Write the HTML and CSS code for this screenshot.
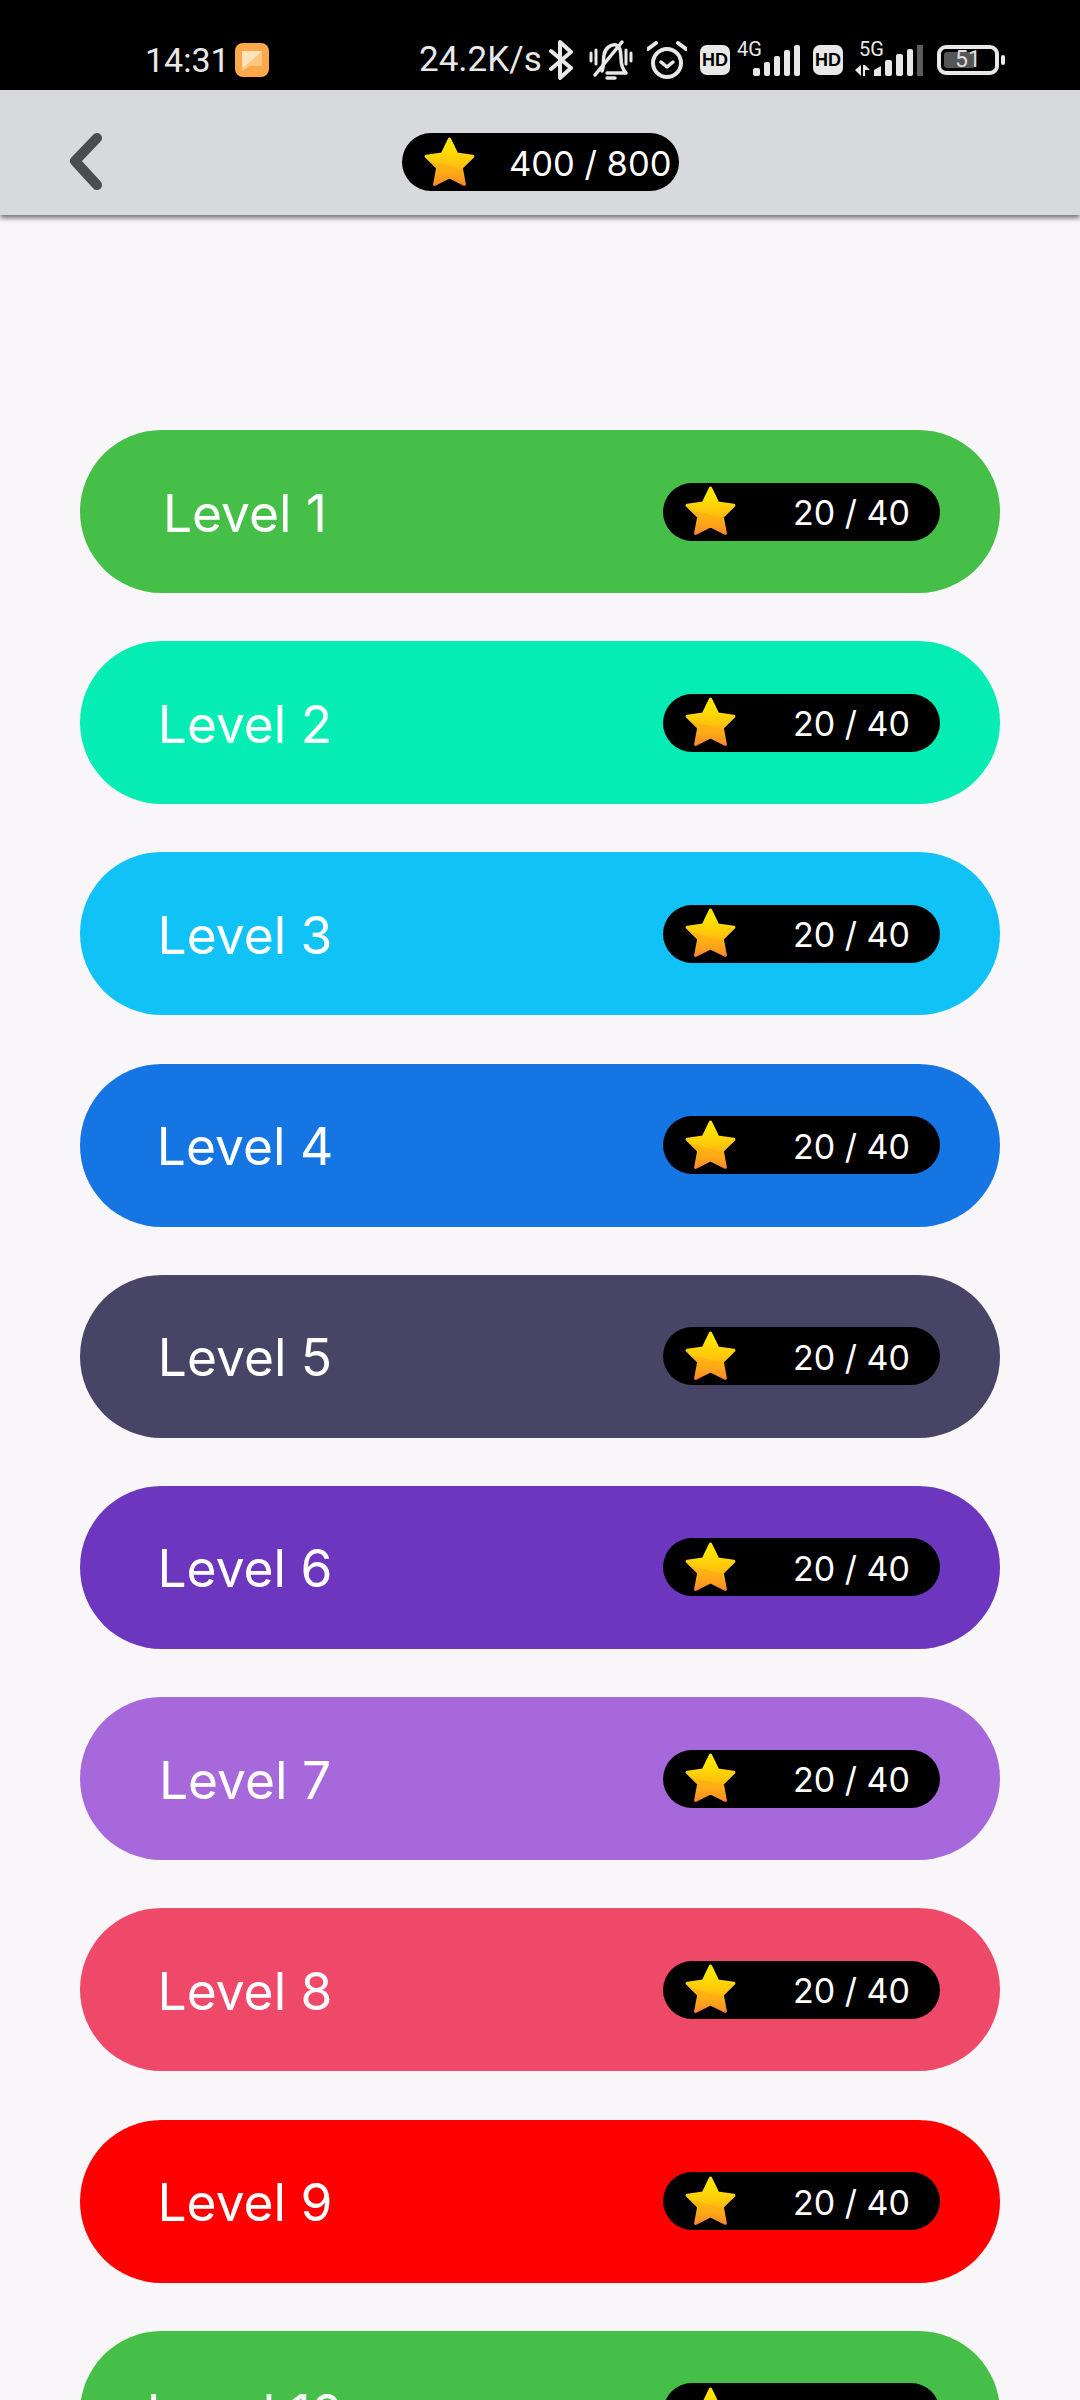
FILE: index.html
```html
<!DOCTYPE html>
<html lang="en">
<head>
    <meta charset="UTF-8">
    <meta name="viewport" content="width=device-width, initial-scale=1.0">
    <title>Levels</title>
    <link rel="stylesheet" href="styles.css">
</head>
<body>
    <!-- Shared star icon -->
    <svg class="defs" width="0" height="0" aria-hidden="true">
        <defs>
            <linearGradient id="starFill" gradientUnits="userSpaceOnUse" x1="50" y1="4" x2="50" y2="96">
                <stop offset="0.15" stop-color="#ffe600"/>
                <stop offset="0.7" stop-color="#ffb413"/>
                <stop offset="1" stop-color="#f47a3a"/>
            </linearGradient>
            <symbol id="star" viewBox="0 0 100 100">
                <path d="M50 6 L63.500 34 L94 38.500 L72 60 L78 91 L50 77 L22 91 L28 60 L6 38.500 L36.500 34 Z" fill="url(#starFill)" stroke="url(#starFill)" stroke-width="6" stroke-linejoin="round"/>
                <path d="M12 47 L74 62 L79 92 L50 78 L21 92 L26 61 Z" fill="#ff9a1a" opacity="0.35"/>
            </symbol>
        </defs>
    </svg>

    <!-- Status bar -->
    <div class="status-bar">
        <span class="clock">14:31</span>
        <svg class="notif" width="34" height="34" viewBox="0 0 34 34">
            <rect width="34" height="34" rx="8" fill="#fba94a"/>
            <path d="M7 8 H27 V23 H14 L7 28 Z" fill="#ffe3bd"/>
            <path d="M7 26 L27 8 V23 H14 L7 28 Z" fill="#ffc67f"/>
        </svg>
        <span class="speed">24.2K/s</span>
        <svg class="ic-bt" width="24" height="40" viewBox="0 0 24 40" fill="none" stroke="#e8e8e8" stroke-width="4" stroke-linecap="round" stroke-linejoin="round">
            <path d="M2 11 L22 28 L11 38 V2 L22 12 L2 29"/>
        </svg>
        <svg class="ic-bell" width="44" height="40" viewBox="0 0 44 40" fill="none" stroke="#e8e8e8" stroke-width="3.500" stroke-linecap="round" stroke-linejoin="round">
            <path d="M2 13 V21 M7 10 V24 M37 10 V24 M42 13 V21" stroke-width="3"/>
            <path d="M13 31 C15 27 14 20 15 15 C16 8 22 4 27 5 C31 6 32 12 32 18 C32 24 33 29 37 33 H18"/>
            <path d="M6 35 L33 2"/>
            <path d="M18 38 H26"/>
        </svg>
        <svg class="ic-alarm" width="40" height="38" viewBox="0 0 40 38" fill="none" stroke="#e8e8e8" stroke-width="4" stroke-linecap="round" stroke-linejoin="round">
            <circle cx="20" cy="22" r="14"/>
            <path d="M1 8 L9 2 M31 2 L39 8"/>
            <path d="M14 21 L20 26 L26 21" stroke-width="3.500"/>
        </svg>
        <span class="hd">HD</span>
        <svg class="ic-signal" width="64" height="42" viewBox="0 -8 64 42">
            <text x="0" y="13" class="net-label">4G</text>
            <g fill="#e8e8e8">
                <rect x="16" y="25" width="7" height="8" rx="2"/>
                <rect x="27" y="19" width="6" height="14" rx="2"/>
                <rect x="37" y="13" width="6" height="20" rx="2"/>
                <rect x="47" y="7" width="6" height="26" rx="2"/>
                <rect x="57" y="2" width="6" height="31" rx="2"/>
            </g>
        </svg>
        <span class="hd hd-second">HD</span>
        <svg class="ic-signal-5g" width="68" height="42" viewBox="0 -8 68 42">
            <text x="4" y="13" class="net-label">5G</text>
            <g fill="#e8e8e8">
                <path d="M6 22 V33 L0 27 Z"/>
                <path d="M10 22 V33 H8 V22 Z M10 22 L15 27 H10 Z"/>
                <path d="M19 27 L26 23 V33 H19 Z"/>
                <rect x="30" y="17" width="7" height="16" rx="2"/>
                <rect x="41" y="11" width="7" height="22" rx="2"/>
                <rect x="52" y="6" width="6" height="27" rx="2"/>
            </g>
            <rect x="62" y="2" width="6" height="31" fill="#5c5c5c"/>
        </svg>
        <div class="battery">
            <div class="battery-fill"></div>
            <span class="battery-num">51</span>
        </div>
        <div class="battery-nub"></div>
    </div>

    <!-- App bar -->
    <header class="app-bar">
        <svg class="back" width="44" height="66" viewBox="0 0 44 66" fill="none" stroke="#4a4c4e" stroke-width="10" stroke-linecap="round" stroke-linejoin="round">
            <path d="M33 9 L11 32 L33 56"/>
        </svg>
        <div class="score score-total">
            <svg class="star"><use href="#star"/></svg>
            <span>400 / 800</span>
        </div>
    </header>

    <!-- Levels -->
    <main class="levels">
        <div class="level level-1">
            <span class="level-name">Level 1</span>
            <div class="score"><svg class="star"><use href="#star"/></svg><span>20 / 40</span></div>
        </div>
        <div class="level level-2">
            <span class="level-name">Level 2</span>
            <div class="score"><svg class="star"><use href="#star"/></svg><span>20 / 40</span></div>
        </div>
        <div class="level level-3">
            <span class="level-name">Level 3</span>
            <div class="score"><svg class="star"><use href="#star"/></svg><span>20 / 40</span></div>
        </div>
        <div class="level level-4">
            <span class="level-name">Level 4</span>
            <div class="score"><svg class="star"><use href="#star"/></svg><span>20 / 40</span></div>
        </div>
        <div class="level level-5">
            <span class="level-name">Level 5</span>
            <div class="score"><svg class="star"><use href="#star"/></svg><span>20 / 40</span></div>
        </div>
        <div class="level level-6">
            <span class="level-name">Level 6</span>
            <div class="score"><svg class="star"><use href="#star"/></svg><span>20 / 40</span></div>
        </div>
        <div class="level level-7">
            <span class="level-name">Level 7</span>
            <div class="score"><svg class="star"><use href="#star"/></svg><span>20 / 40</span></div>
        </div>
        <div class="level level-8">
            <span class="level-name">Level 8</span>
            <div class="score"><svg class="star"><use href="#star"/></svg><span>20 / 40</span></div>
        </div>
        <div class="level level-9">
            <span class="level-name">Level 9</span>
            <div class="score"><svg class="star"><use href="#star"/></svg><span>20 / 40</span></div>
        </div>
        <div class="level level-10">
            <span class="level-name">Level 10</span>
            <div class="score"><svg class="star"><use href="#star"/></svg><span>20 / 40</span></div>
        </div>
    </main>
</body>
</html>
```
FILE: styles.css
```css
html, body {
    height: 2400px;
    overflow: hidden;
}

body {
    margin: 0;
    font-family: 'Inter', sans-serif;
    background-color: #f8f6f8;
}

.defs {
    display: block;
    height: 0;
}

/* Status bar */
.status-bar {
    height: 90px;
    box-sizing: border-box;
    padding: 43px 0 0 145px;
    background-color: #000;
    color: #e8e8e8;
    display: flex;
    align-items: flex-start;
}

.status-bar svg {
    flex: none;
    display: block;
}

.clock {
    width: 90px;
    font-family: 'Roboto', sans-serif;
    font-size: 34px;
    line-height: 34px;
}

.speed {
    width: 130px;
    margin-left: 150px;
    font-family: 'Roboto', sans-serif;
    font-size: 35px;
    line-height: 34px;
}

.ic-bt {
    margin-top: -3px;
}

.ic-bell {
    margin-left: 16px;
    margin-top: -3px;
}

.ic-alarm {
    margin-left: 14px;
    margin-top: -2px;
}

.hd {
    width: 30px;
    height: 30px;
    margin-left: 13px;
    margin-top: 2px;
    border-radius: 7px;
    background-color: #e8e8e8;
    color: #000;
    font-family: 'Liberation Sans', sans-serif;
    font-size: 18px;
    font-weight: bold;
    line-height: 30px;
    text-align: center;
}

.hd-second {
    margin-left: 12px;
}

.ic-signal {
    margin-left: 7px;
    margin-top: -8px;
}

.ic-signal-5g {
    margin-left: 12px;
    margin-top: -8px;
}

.net-label {
    fill: #e8e8e8;
    font-family: 'Roboto', sans-serif;
    font-size: 20px;
}

.battery {
    width: 62px;
    height: 30px;
    box-sizing: border-box;
    margin-left: 14px;
    margin-top: 2px;
    border: 4px solid #e8e8e8;
    border-radius: 9px;
    position: relative;
    display: flex;
    justify-content: center;
}

.battery-fill {
    position: absolute;
    left: 3px;
    top: 3px;
    bottom: 3px;
    width: 31px;
    border-radius: 3px;
    background-color: #555;
}

.battery-num {
    position: relative;
    color: #ddd;
    font-family: 'Roboto', sans-serif;
    font-size: 23px;
    line-height: 22px;
}

.battery-nub {
    width: 4px;
    height: 10px;
    margin-left: 2px;
    margin-top: 12px;
    border-radius: 2px;
    background-color: #e8e8e8;
}

/* App bar */
.app-bar {
    height: 125px;
    box-sizing: border-box;
    padding-top: 19px;
    background-color: #d8d9dd;
    box-shadow: 0 3px 5px rgba(0, 0, 0, 0.55);
    display: grid;
    grid-template-columns: 1fr auto 1fr;
    align-items: center;
}

.back {
    margin-left: 64px;
    display: block;
}

.score {
    width: 277px;
    height: 58px;
    box-sizing: border-box;
    padding: 0 30px 0 21px;
    border-radius: 29px;
    background-color: #000;
    color: #fff;
    font-size: 34px;
    display: flex;
    align-items: center;
    justify-content: space-between;
}

.score span {
    padding-top: 2px;
}

.score-total {
    padding-right: 7px;
    font-size: 34.500px;
}

.star {
    width: 53px;
    height: 53px;
    flex: none;
}

/* Levels */
.levels {
    padding: 215px 80px 0;
    display: flex;
    flex-direction: column;
    gap: 48.2px;
}

.level {
    height: 163px;
    flex: none;
    padding-right: 60px;
    border-radius: 81.500px;
    color: #fff;
    display: flex;
    align-items: center;
    justify-content: space-between;
}

.level-name {
    width: 330px;
    padding-top: 2px;
    font-size: 51.500px;
    font-weight: 400;
    text-align: center;
}

.level-1, .level-10 { background-color: #45bf47; }
.level-2 { background-color: #05edb4; }
.level-3 { background-color: #10c2f5; }
.level-4 { background-color: #1575e3; }
.level-5 { background-color: #484466; }
.level-6 { background-color: #6c36bf; }
.level-7 { background-color: #a668da; }
.level-8 { background-color: #ee4968; }
.level-9 { background-color: #ff0000; }
```
